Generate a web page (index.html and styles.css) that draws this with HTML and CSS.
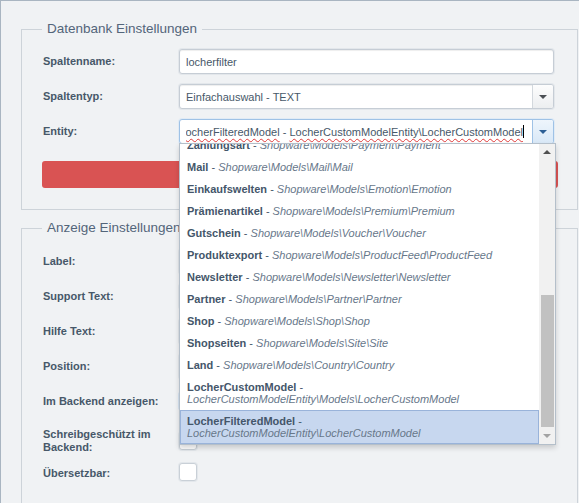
FILE: index.html
```html
<!DOCTYPE html>
<html lang="de">
<head>
<meta charset="utf-8">
<title>Datenbank Einstellungen</title>
<link rel="stylesheet" href="styles.css">
</head>
<body>
<div class="panel">
  <fieldset class="group group-db">
    <legend>Datenbank Einstellungen</legend>
    <div class="row">
      <label class="lbl">Spaltenname:</label>
      <div class="field"><span class="val">locherfilter</span></div>
    </div>
    <div class="row">
      <label class="lbl">Spaltentyp:</label>
      <div class="field combo"><span class="val">Einfachauswahl - TEXT</span><span class="trigger"><i class="arrow"></i></span></div>
    </div>
    <div class="row">
      <label class="lbl">Entity:</label>
      <div class="combo-wrap">
        <div class="field combo focus">
          <span class="val clip"><span class="typed"><span class="misspelt">LocherFilteredModel</span> - <span class="misspelt">LocherCustomModelEntity\LocherCustomModel</span></span><span class="caret"></span></span>
          <span class="trigger"><i class="arrow"></i></span>
        </div>
        <div class="picker">
          <div class="opts">
            <div class="opts-inner">
              <div class="opt"><b>Zahlungsart</b> - <span class="path">Shopware\Models\Payment\Payment</span></div>
              <div class="opt"><b>Mail</b> - <span class="path">Shopware\Models\Mail\Mail</span></div>
              <div class="opt"><b>Einkaufswelten</b> - <span class="path">Shopware\Models\Emotion\Emotion</span></div>
              <div class="opt"><b>Prämienartikel</b> - <span class="path">Shopware\Models\Premium\Premium</span></div>
              <div class="opt"><b>Gutschein</b> - <span class="path">Shopware\Models\Voucher\Voucher</span></div>
              <div class="opt"><b>Produktexport</b> - <span class="path">Shopware\Models\ProductFeed\ProductFeed</span></div>
              <div class="opt"><b>Newsletter</b> - <span class="path">Shopware\Models\Newsletter\Newsletter</span></div>
              <div class="opt"><b>Partner</b> - <span class="path">Shopware\Models\Partner\Partner</span></div>
              <div class="opt"><b>Shop</b> - <span class="path">Shopware\Models\Shop\Shop</span></div>
              <div class="opt"><b>Shopseiten</b> - <span class="path">Shopware\Models\Site\Site</span></div>
              <div class="opt"><b>Land</b> - <span class="path">Shopware\Models\Country\Country</span></div>
              <div class="opt"><b>LocherCustomModel</b> - <span class="path">LocherCustomModelEntity\Models\LocherCustomModel</span></div>
              <div class="opt sel"><b>LocherFilteredModel</b> - <span class="path">LocherCustomModelEntity\LocherCustomModel</span></div>
            </div>
          </div>
          <div class="scroll">
            <div class="sbtn"><i class="up"></i></div>
            <div class="track"><div class="thumb"></div></div>
            <div class="sbtn"><i class="down"></i></div>
          </div>
        </div>
      </div>
    </div>
    <button class="btn-danger" type="button"></button>
  </fieldset>

  <fieldset class="group group-view">
    <legend>Anzeige Einstellungen</legend>
    <div class="row">
      <label class="lbl">Label:</label>
      <div class="field"></div>
    </div>
    <div class="row">
      <label class="lbl">Support Text:</label>
      <div class="field"></div>
    </div>
    <div class="row">
      <label class="lbl">Hilfe Text:</label>
      <div class="field"></div>
    </div>
    <div class="row">
      <label class="lbl">Position:</label>
      <div class="field"></div>
    </div>
    <div class="row check check-backend">
      <label class="lbl">Im Backend anzeigen:</label>
      <span class="box checked"></span>
    </div>
    <div class="row check check-readonly">
      <label class="lbl">Schreibgeschützt im Backend:</label>
      <span class="box"></span>
    </div>
    <div class="row check check-translate">
      <label class="lbl">Übersetzbar:</label>
      <span class="box"></span>
    </div>
  </fieldset>
</div>
</body>
</html>
```
FILE: styles.css
```css
html, body {
  margin: 0;
  padding: 0;
  background: #f0f2f4;
}

body {
  font-family: "Liberation Sans", Arial, sans-serif;
  color: #475869;
}

.panel {
  width: 579px;
  height: 503px;
  box-sizing: border-box;
  border-top: 1px solid #a9b5c1;
  border-left: 1px solid #a9b5c1;
  padding: 0 1px 0 20px;
  overflow: hidden;
}

.group {
  margin: 20px 0 0;
  padding: 12px 23px 21px 21px;
  border: 1px solid #cdd3d9;
  min-width: 0;
}

.group-view {
  margin-top: 10px;
  padding-top: 13px;
  padding-bottom: 16px;
}

.group legend {
  padding: 0 5px;
  margin-left: -1px;
  font-size: 13.5px;
  line-height: 16px;
  color: #53657a;
}

.row {
  display: flex;
  align-items: center;
  min-height: 25px;
}

.row + .row {
  margin-top: 10px;
}

.lbl {
  width: 136px;
  flex: none;
  font-size: 11px;
  font-weight: bold;
  line-height: 13px;
  color: #475869;
}

.field {
  flex: 1;
  height: 25px;
  box-sizing: border-box;
  border: 1px solid #c6cdd5;
  border-radius: 3px;
  background: #fff;
  box-shadow: 0 0 0 1px #e3e7eb, inset 0 1px 1px rgba(0, 0, 0, 0.07);
  display: flex;
  align-items: center;
  font-size: 11px;
  color: #475869;
  min-width: 0;
}

.val {
  padding-left: 6px;
  white-space: nowrap;
}

.val.clip {
  padding-left: 0;
  margin: 0 8px 0 6px;
  flex: 1;
  align-self: stretch;
  min-width: 0;
  overflow: hidden;
  display: flex;
  justify-content: flex-end;
  align-items: center;
}

.typed {
  flex: none;
}

.misspelt {
  text-decoration-line: underline;
  text-decoration-style: wavy;
  text-decoration-color: #e03a3a;
  text-decoration-thickness: 1px;
  text-underline-offset: 2px;
  text-decoration-skip-ink: none;
}

.caret {
  flex: none;
  width: 1px;
  height: 13px;
  background: #000;
}

.combo .val:not(.clip) {
  flex: 1;
}

.trigger {
  flex: none;
  width: 20px;
  align-self: stretch;
  border-left: 1px solid #d3d8dd;
  border-radius: 0 2px 2px 0;
  background: linear-gradient(#fdfdfd, #eceef0);
  display: flex;
  align-items: center;
  justify-content: center;
}

.arrow {
  width: 0;
  height: 0;
  border-left: 4px solid transparent;
  border-right: 4px solid transparent;
  border-top: 4px solid #4b4f54;
}

.focus {
  border-color: #9fc2e6;
  box-shadow: 0 0 0 1px #e1ebf5;
}

.focus .trigger {
  border-left-color: #9fc2e6;
  background: linear-gradient(#eef5fc, #d9e8f7);
}

.focus .arrow {
  border-top-color: #2d5f95;
}

.combo-wrap {
  flex: 1;
  position: relative;
  display: flex;
  min-width: 0;
}

.picker {
  position: absolute;
  left: 0;
  top: 24px;
  width: 377px;
  height: 302px;
  box-sizing: border-box;
  border: 1px solid #b4bfca;
  background: #fff;
  display: flex;
  box-shadow: 0 3px 5px rgba(0, 0, 0, 0.16);
  z-index: 5;
}

.opts {
  flex: 1;
  overflow: hidden;
}

.opts-inner {
  margin-top: -10px;
}

.opt {
  padding: 4px 6px;
  border: 1px solid transparent;
  font-size: 11px;
  line-height: 12px;
  color: #44566a;
}

.opt b {
  font-weight: bold;
}

.opt .path {
  font-style: italic;
  color: #67778a;
}

.opt.sel {
  background: #c7d7ef;
  border-color: #99b3da;
}

.scroll {
  width: 16px;
  flex: none;
  background: #f1f1f1;
  display: flex;
  flex-direction: column;
}

.sbtn {
  height: 16px;
  flex: none;
  display: flex;
  align-items: center;
  justify-content: center;
}

.up {
  width: 0;
  height: 0;
  border-left: 4px solid transparent;
  border-right: 4px solid transparent;
  border-bottom: 4px solid #505050;
}

.down {
  width: 0;
  height: 0;
  border-left: 4px solid transparent;
  border-right: 4px solid transparent;
  border-top: 4px solid #a3a3a3;
}

.track {
  flex: 1;
  padding: 135px 1px 1px 2px;
  display: flex;
  flex-direction: column;
}

.thumb {
  flex: 1;
  background: #c1c1c1;
}

.btn-danger {
  display: block;
  width: calc(100% + 5px);
  height: 27px;
  margin: 17px -4px 0 -1px;
  border: 0;
  border-radius: 3px;
  background: #d95353;
  padding: 0;
}

.check {
  align-items: flex-start;
}

.check .lbl {
  padding-top: 5px;
}

.box {
  width: 18px;
  height: 18px;
  box-sizing: border-box;
  border: 1px solid #c9d0d7;
  border-radius: 3px;
  background: #fff;
  box-shadow: 0 0 0 1px #e3e7eb;
  flex: none;
}

.box.checked {
  border-color: #a9c6e8;
  box-shadow: 0 0 0 1px #d7e5f4;
}

.check-backend .lbl {
  padding-top: 6px;
}

.check-backend .box {
  margin-top: 3px;
}

.check-readonly .lbl {
  padding-top: 4px;
  width: 120px;
  margin-right: 16px;
}

.check-readonly .box {
  margin-top: 8px;
}

.row.check-translate {
  margin-top: 8px;
}

.check-translate .box {
  margin-top: 1px;
}
```
